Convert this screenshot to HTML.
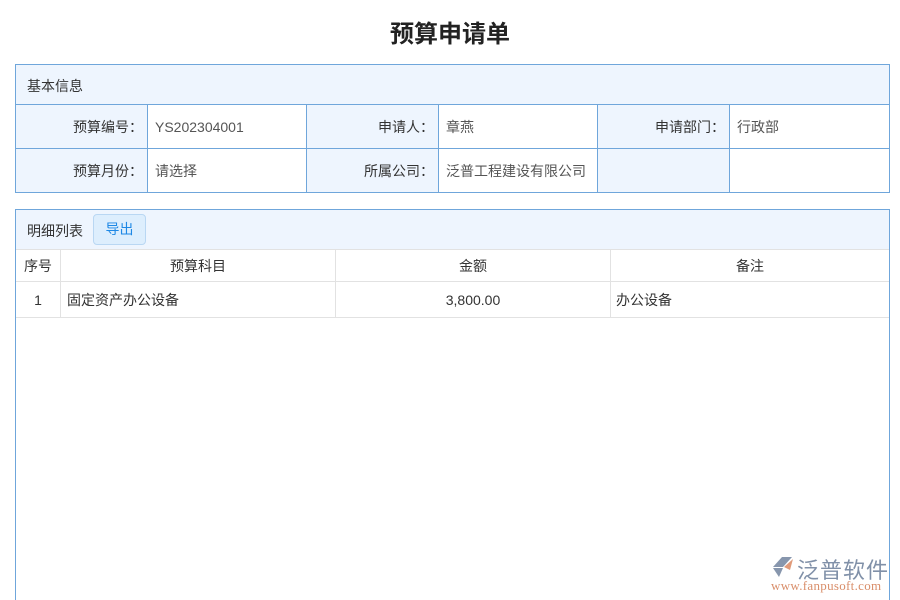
<!DOCTYPE html>
<html><head><meta charset="utf-8"><style>
*{margin:0;padding:0;box-sizing:border-box}
html,body{width:900px;height:600px;overflow:hidden}
body{background:#fff;font-family:"Liberation Sans","Noto Sans CJK SC",sans-serif;font-size:14px;color:#333;position:relative}
.a{position:absolute}
h1{position:absolute;left:0;width:900px;top:14px;text-align:center;font-size:24px;font-weight:bold;color:#222}
.box{position:absolute;border:1px solid #6fa6db}
.c{position:absolute;display:flex;align-items:center;border-right:1px solid #6fa6db;border-bottom:1px solid #6fa6db}
.l{background:#eef5fe;justify-content:flex-end;padding-right:4px;color:#333}
.v{background:#fff;padding-left:7px;color:#555}
.g{position:absolute;display:flex;align-items:center;border-right:1px solid #e2e2e2;border-bottom:1px solid #e2e2e2;color:#333}
</style></head><body>
<h1>预算申请单</h1>
<div class="box" style="left:15px;top:64px;width:875px;height:129px;background:#eef5fe">
 <div class="a" style="left:11px;top:11px;font-size:14px">基本信息</div>
 <div class="a" style="left:0;top:39px;width:873px;border-top:1px solid #6fa6db"></div>
 <div class="c l" style="left:0;top:40px;width:132px;height:44px">预算编号：</div>
 <div class="c v" style="left:132px;top:40px;width:159px;height:44px">YS202304001</div>
 <div class="c l" style="left:291px;top:40px;width:132px;height:44px">申请人：</div>
 <div class="c v" style="left:423px;top:40px;width:159px;height:44px">章燕</div>
 <div class="c l" style="left:582px;top:40px;width:132px;height:44px">申请部门：</div>
 <div class="c v" style="left:714px;top:40px;width:159px;height:44px;border-right:none">行政部</div>
 <div class="c l" style="left:0;top:84px;width:132px;height:43px;border-bottom:none">预算月份：</div>
 <div class="c v" style="left:132px;top:84px;width:159px;height:43px;border-bottom:none">请选择</div>
 <div class="c l" style="left:291px;top:84px;width:132px;height:43px;border-bottom:none">所属公司：</div>
 <div class="c v" style="left:423px;top:84px;width:159px;height:43px;border-bottom:none">泛普工程建设有限公司</div>
 <div class="c l" style="left:582px;top:84px;width:132px;height:43px;border-bottom:none"></div>
 <div class="c v" style="left:714px;top:84px;width:159px;height:43px;border:none"></div>
</div>
<div class="box" style="left:15px;top:209px;width:875px;height:400px">
 <div class="a" style="left:0;top:0;width:873px;height:40px;background:#eef5fe;border-bottom:1px solid #e2e2e2"></div>
 <div class="a" style="left:11px;top:11px">明细列表</div>
 <div class="a" style="left:77px;top:4px;width:53px;height:31px;border:1px solid #b9d7f3;border-radius:4px;background:#ddeefd;color:#1e88e5;text-align:center;line-height:29px">导出</div>
 <div class="g" style="left:0;top:40px;width:45px;height:32px;justify-content:center">序号</div>
 <div class="g" style="left:45px;top:40px;width:275px;height:32px;justify-content:center">预算科目</div>
 <div class="g" style="left:320px;top:40px;width:275px;height:32px;justify-content:center">金额</div>
 <div class="g" style="left:595px;top:40px;width:278px;height:32px;justify-content:center;border-right:none">备注</div>
 <div class="g" style="left:0;top:72px;width:45px;height:36px;justify-content:center">1</div>
 <div class="g" style="left:45px;top:72px;width:275px;height:36px;padding-left:6px">固定资产办公设备</div>
 <div class="g" style="left:320px;top:72px;width:275px;height:36px;justify-content:center">3,800.00</div>
 <div class="g" style="left:595px;top:72px;width:278px;height:36px;padding-left:5px;border-right:none">办公设备</div>
</div>
<svg class="a" style="left:770px;top:555px" width="26" height="24" viewBox="0 0 26 24"><path d="M3 12 L12 2 L22 2 L13 12 Z" fill="#8796ad"/><path d="M3 13 L13 13 L9 22 Z" fill="#8796ad"/><path d="M14 12 L23 4 L20 15 Z" fill="#e09a7a"/></svg>
<div class="a" style="left:797px;top:553px;font-size:22px;color:#8090a8;letter-spacing:1px">泛普软件</div>
<div class="a" style="left:771px;top:578px;font-size:13px;color:#d98e6a;font-family:'Liberation Serif',serif;letter-spacing:0.3px">www.fanpusoft.com</div>
</body></html>
